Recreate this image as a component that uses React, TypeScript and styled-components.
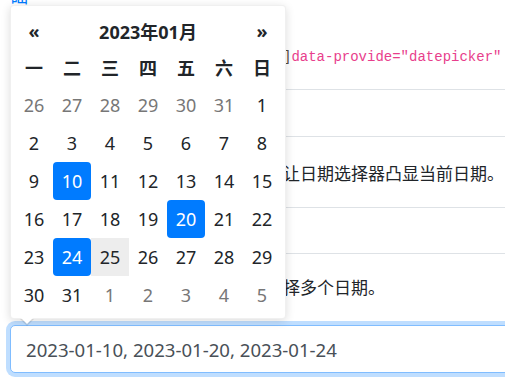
import styled, { createGlobalStyle } from "styled-components";

const GlobalStyle = createGlobalStyle`
  html, body {
    margin: 0;
    padding: 0;
    background: #fff;
    overflow: hidden;
  }
  body {
    font-family: "Noto Sans", "Noto Sans CJK SC", sans-serif;
    color: #212529;
  }
`;

const Page = styled.div`
  position: relative;
  display: flow-root;
  width: 505px;
  height: 382px;
  padding-left: 10px;
  box-sizing: border-box;
`;

const TopLink = styled.a`
  display: block;
  margin-top: -14px;
  height: 20px;
  line-height: 20px;
  font-size: 18px;
  color: #007bff;
  text-decoration: none;
`;

const DocTable = styled.div`
  display: flex;
  flex-direction: column;
  width: 495px;
  margin-top: 14px;
`;

const Row = styled.div<{ $h: number; $last?: boolean }>`
  display: grid;
  grid-template-columns: 273px 222px;
  align-items: center;
  height: ${(p) => p.$h}px;
  border-bottom: ${(p) => (p.$last ? "none" : "1px solid #dee2e6")};
  box-sizing: border-box;
`;

const NameCell = styled.div`
  padding-left: 12px;
  font-size: 17px;
  white-space: nowrap;
`;

const DescCell = styled.div`
  font-size: 17px;
  white-space: nowrap;
  color: #212529;
`;

const Bracket = styled.span`
  font-family: "Liberation Mono", monospace;
  font-size: 14px;
  color: #5a4a3a;
`;

const Code = styled.code`
  font-family: "Liberation Mono", "DejaVu Sans Mono", monospace;
  font-size: 14px;
  color: #e83e8c;
`;

const Input = styled.input`
  display: block;
  margin-top: 6px;
  width: 520px;
  height: 48px;
  box-sizing: border-box;
  padding: 0 15px;
  font-family: "Noto Sans", "Noto Sans CJK SC", sans-serif;
  font-size: 18.6px;
  color: #495057;
  background: #fff;
  border: 1px solid #80bdff;
  border-radius: 5px;
  outline: none;
  box-shadow: 0 0 0 4px rgba(0, 123, 255, 0.25);
`;

const Dropdown = styled.div`
  position: absolute;
  left: 10px;
  top: 5px;
  width: 276px;
  box-sizing: border-box;
  padding: 4px;
  background: #fff;
  border: 1px solid rgba(0, 0, 0, 0.06);
  border-radius: 4px;
  box-shadow: 0 2px 10px rgba(0, 0, 0, 0.14);
  z-index: 5;

  &::before {
    content: "";
    position: absolute;
    left: 9px;
    bottom: -8px;
    border-left: 7px solid transparent;
    border-right: 7px solid transparent;
    border-top: 7px solid rgba(0, 0, 0, 0.1);
  }
  &::after {
    content: "";
    position: absolute;
    left: 10px;
    bottom: -6px;
    border-left: 6px solid transparent;
    border-right: 6px solid transparent;
    border-top: 6px solid #fff;
  }
`;

const Grid = styled.div`
  display: grid;
  grid-template-columns: repeat(7, 38px);
  grid-auto-rows: 38px;
`;

const HeadCell = styled.div<{ $span?: number }>`
  grid-column: span ${(p) => p.$span ?? 1};
  display: flex;
  align-items: center;
  justify-content: center;
  font-size: 18px;
  font-weight: 700;
  color: #212529;
  padding-top: 4px;
`;

const WeekCell = styled.div`
  display: flex;
  align-items: center;
  justify-content: center;
  font-family: "Noto Sans CJK SC", sans-serif;
  font-size: 18px;
  font-weight: 700;
  color: #212529;
`;

type DayKind = "normal" | "muted" | "active" | "today";

const DayCell = styled.div<{ $kind: DayKind }>`
  display: flex;
  align-items: center;
  justify-content: center;
  font-size: 18px;
  border-radius: ${(p) => (p.$kind === "today" ? "0" : "4px")};
  color: ${(p) =>
    p.$kind === "muted" ? "#777" : p.$kind === "active" ? "#fff" : "#212529"};
  background: ${(p) =>
    p.$kind === "active" ? "#007bff" : p.$kind === "today" ? "#ededed" : "transparent"};
`;

const weekdays = ["一", "二", "三", "四", "五", "六", "日"];
const selected = [10, 20, 24];

const buildDays = () => {
  const days: { n: number; kind: DayKind }[] = [];
  [26, 27, 28, 29, 30, 31].forEach((n) => days.push({ n, kind: "muted" }));
  for (let n = 1; n <= 31; n++) {
    let kind: DayKind = "normal";
    if (selected.includes(n)) kind = "active";
    else if (n === 25) kind = "today";
    days.push({ n, kind });
  }
  [1, 2, 3, 4, 5].forEach((n) => days.push({ n, kind: "muted" }));
  return days;
};

const App = () => {
  const days = buildDays();

  return (
    <Page>
      <GlobalStyle />
      <TopLink href="#">础</TopLink>
      <DocTable>
        <Row $h={70}>
          <NameCell>autoclose</NameCell>
          <DescCell>
            <Bracket>]</Bracket>
            <Code>data-provide="datepicker"</Code>
          </DescCell>
        </Row>
        <Row $h={47}>
          <NameCell>format</NameCell>
          <DescCell />
        </Row>
        <Row $h={71}>
          <NameCell>todayHighlight</NameCell>
          <DescCell>让日期选择器凸显当前日期。</DescCell>
        </Row>
        <Row $h={46}>
          <NameCell>language</NameCell>
          <DescCell />
        </Row>
        <Row $h={65} $last>
          <NameCell>multidate</NameCell>
          <DescCell>择多个日期。</DescCell>
        </Row>
      </DocTable>
      <Input readOnly value="2023-01-10, 2023-01-20, 2023-01-24" />

      <Dropdown>
        <Grid>
          <HeadCell>«</HeadCell>
          <HeadCell $span={5}>2023年01月</HeadCell>
          <HeadCell>»</HeadCell>
          {weekdays.map((w) => (
            <WeekCell key={w}>{w}</WeekCell>
          ))}
          {days.map((d, i) => (
            <DayCell key={i} $kind={d.kind}>
              {d.n}
            </DayCell>
          ))}
        </Grid>
      </Dropdown>
    </Page>
  );
};

export default App;
